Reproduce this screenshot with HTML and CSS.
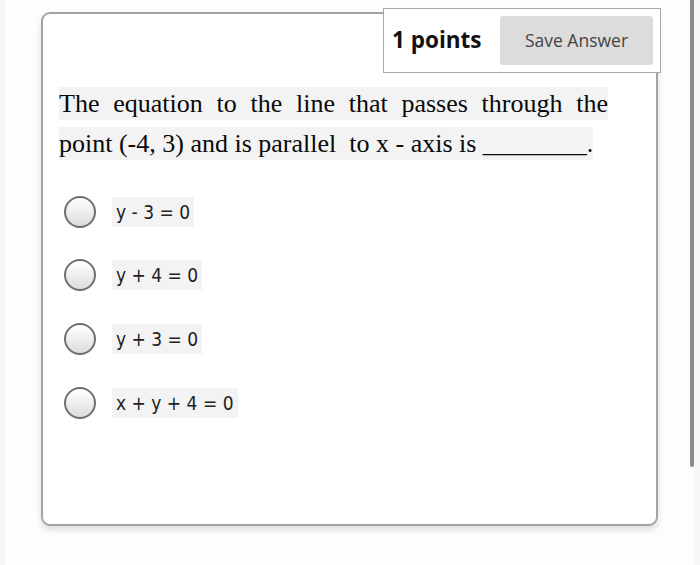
FILE: index.html
```html
<!DOCTYPE html>
<html>
<head>
<meta charset="utf-8">
<link rel="stylesheet" href="styles.css">
</head>
<body>
<div class="page">
  <div class="card">
    <div class="points-box">
      <span class="points">1 points</span>
      <button class="save">Save Answer</button>
    </div>
    <p class="question"><span class="hl">The equation to the line that passes through the point (-4, 3) and is parallel&nbsp; to x - axis is ________.</span></p>
    <ul class="options">
      <li class="option"><span class="radio"></span><span class="label">y - 3 = 0</span></li>
      <li class="option"><span class="radio"></span><span class="label">y + 4 = 0</span></li>
      <li class="option"><span class="radio"></span><span class="label">y + 3 = 0</span></li>
      <li class="option"><span class="radio"></span><span class="label">x + y + 4 = 0</span></li>
    </ul>
  </div>
  <div class="scrollbar"></div>
</div>
</body>
</html>
```

FILE: styles.css
```css
html, body {
  margin: 0;
  padding: 0;
}
body {
  background: #f7f7f7;
  width: 700px;
  height: 565px;
  overflow: hidden;
}
.page {
  position: relative;
  width: 694px;
  height: 565px;
  background: #fdfdfd;
  padding: 12px 0 0 41px;
  box-sizing: border-box;
  border-left: 5px solid #f6f6f6;
}
.card {
  position: relative;
  width: 617px;
  height: 514px;
  margin-left: -5px;
  box-sizing: border-box;
  background: #fff;
  border: 2px solid #a3a3a3;
  border-radius: 9px;
  box-shadow: 0 4px 6px rgba(0,0,0,0.12);
  padding: 70px 48px 0 16px;
}
.points-box {
  position: absolute;
  top: -6px;
  right: -5px;
  width: 278px;
  height: 65px;
  box-sizing: border-box;
  background: #fff;
  border: 1px solid #a8a8a8;
  display: flex;
  align-items: center;
  justify-content: space-between;
  padding: 0 7px 0 8px;
}
.points {
  font-family: "Open Sans", sans-serif;
  font-weight: 700;
  font-size: 22.5px;
  color: #111;
  margin-top: -2px;
}
.save {
  font-family: "Open Sans", sans-serif;
  font-size: 17.5px;
  color: #444;
  background: #dcdcdc;
  border: none;
  border-radius: 3px;
  width: 153px;
  height: 49px;
  padding: 0;
  margin-top: -1px;
}
.question {
  margin: 0;
  font-family: "Liberation Serif", "Times New Roman", serif;
  font-size: 26px;
  line-height: 40px;
  text-align: justify;
  color: #0a0a0a;
}
.hl {
  background: #f3f3f3;
  padding: 2px 0;
}
.options {
  list-style: none;
  margin: 31px 0 0 5px;
  padding: 0;
  display: flex;
  flex-direction: column;
  gap: 30.7px;
}
.option {
  display: flex;
  align-items: center;
  height: 33px;
}
.radio {
  width: 28px;
  height: 28px;
  border-radius: 50%;
  border: 2px solid #6f6f6f;
  background: linear-gradient(#ffffff, #dcdcdc);
  flex: none;
}
.label {
  margin-left: 16px;
  font-family: "DejaVu Sans Condensed", "DejaVu Sans", sans-serif;
  font-stretch: condensed;
  font-size: 19px;
  line-height: 22px;
  color: #222;
  background: #f3f3f3;
  padding: 4px 4px 4px 4px;
}
.scrollbar {
  position: absolute;
  top: 0;
  right: 0;
  width: 4px;
  height: 467px;
  background: #8a8a8a;
  border-radius: 0 0 2px 2px;
}
```
